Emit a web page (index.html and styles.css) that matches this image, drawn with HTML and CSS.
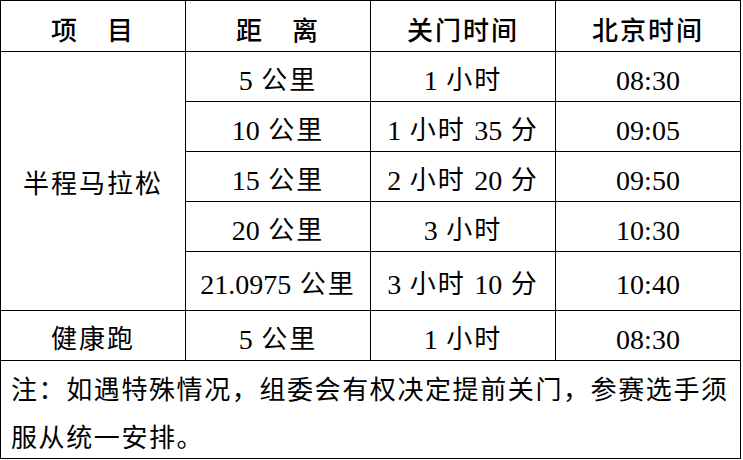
FILE: index.html
```html
<!DOCTYPE html>
<html lang="zh-CN">
<head>
<meta charset="utf-8">
<title>关门时间</title>
<link rel="stylesheet" href="styles.css">
</head>
<body>
<div class="table">
  <div class="cell head">项　目</div>
  <div class="cell head">距　离</div>
  <div class="cell head">关门时间</div>
  <div class="cell head">北京时间</div>

  <div class="cell group">半程马拉松</div>
  <div class="cell"><span class="num">5</span> 公里</div>
  <div class="cell"><span class="num">1</span> 小时</div>
  <div class="cell"><span class="num">08:30</span></div>

  <div class="cell"><span class="num">10</span> 公里</div>
  <div class="cell"><span class="num">1</span> 小时 <span class="num">35</span> 分</div>
  <div class="cell"><span class="num">09:05</span></div>

  <div class="cell"><span class="num">15</span> 公里</div>
  <div class="cell"><span class="num">2</span> 小时 <span class="num">20</span> 分</div>
  <div class="cell"><span class="num">09:50</span></div>

  <div class="cell"><span class="num">20</span> 公里</div>
  <div class="cell"><span class="num">3</span> 小时</div>
  <div class="cell"><span class="num">10:30</span></div>

  <div class="cell"><span class="num">21.0975</span> 公里</div>
  <div class="cell"><span class="num">3</span> 小时 <span class="num">10</span> 分</div>
  <div class="cell"><span class="num">10:40</span></div>

  <div class="cell">健康跑</div>
  <div class="cell"><span class="num">5</span> 公里</div>
  <div class="cell"><span class="num">1</span> 小时</div>
  <div class="cell"><span class="num">08:30</span></div>

  <div class="note">注：如遇特殊情况，组委会有权决定提前关门，参赛选手须服从统一安排。</div>
</div>
</body>
</html>
```

FILE: styles.css
```css
html, body {
  margin: 0;
  padding: 0;
  background: #fff;
}

.table {
  display: grid;
  grid-template-columns: repeat(4, 184px);
  grid-template-rows: 50px 49px 49px 49px 49px 58px 49px 97px;
  gap: 1px;
  padding: 1px;
  width: max-content;
  background: #000;
  font-family: "Liberation Serif", "Noto Sans CJK SC", serif;
  color: #000;
  font-size: 26px;
  letter-spacing: 2px;
}

.cell {
  background: #fff;
  display: flex;
  align-items: center;
  justify-content: center;
  padding-top: 8px;
  line-height: 30px;
  white-space: pre;
}

.num {
  font-size: 28px;
  letter-spacing: 0;
}

.head {
  padding-top: 12px;
  font-weight: 500;
}

.group {
  grid-row: span 5;
}

.note {
  grid-column: 1 / -1;
  background: #fff;
  padding: 6px 0 0 10px;
  font-size: 26px;
  letter-spacing: 1.6px;
  line-height: 48px;
  overflow: hidden;
}
```
